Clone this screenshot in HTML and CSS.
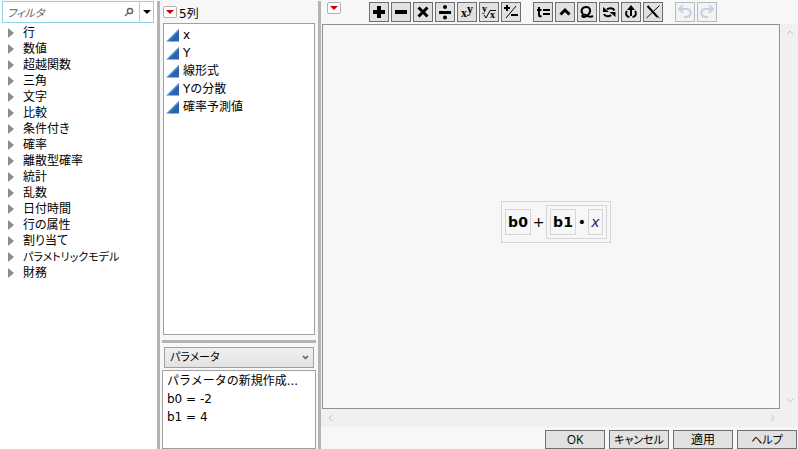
FILE: index.html
```html
<!DOCTYPE html>
<html lang="ja">
<head>
  <meta charset="UTF-8">
  <meta name="viewport" content="width=device-width, initial-scale=1.0">
  <title>計算式エディタ</title>
  <link rel="stylesheet" href="styles.css">
</head>
<body>

  <div class="editor">

    <!-- Function list -->
    <aside class="functions">
      <div class="filter">
        <input type="text" class="filter-input" placeholder="フィルタ" aria-label="フィルタ">
        <svg class="search-icon" width="10" height="10" viewBox="0 0 10 10"><circle cx="6" cy="4" r="2.6"/><path d="M4 6L1 9"/></svg>
        <button class="filter-menu" aria-label="フィルタのオプション"></button>
      </div>
      <ul class="tree">
        <li>行</li>
        <li>数値</li>
        <li>超越関数</li>
        <li>三角</li>
        <li>文字</li>
        <li>比較</li>
        <li>条件付き</li>
        <li>確率</li>
        <li>離散型確率</li>
        <li>統計</li>
        <li>乱数</li>
        <li>日付時間</li>
        <li>行の属性</li>
        <li>割り当て</li>
        <li class="kana">パラメトリックモデル</li>
        <li>財務</li>
      </ul>
    </aside>

    <!-- Columns and parameters -->
    <section class="middle">
      <div class="columns-head">
        <button class="red-menu" aria-label="列メニュー"></button>
        <span>5列</span>
      </div>
      <ul class="columns">
        <li>x</li>
        <li>Y</li>
        <li>線形式</li>
        <li>Yの分散</li>
        <li>確率予測値</li>
      </ul>
      <div class="splitter"></div>
      <div class="select-wrap">
        <select class="kind kana" aria-label="種類">
          <option>パラメータ</option>
        </select>
        <svg class="chevron" width="7" height="5" viewBox="0 0 7 5"><path d="M1 1l2.5 2.5L6 1"/></svg>
      </div>
      <ul class="params">
        <li>パラメータの新規作成...</li>
        <li>b0 = -2</li>
        <li>b1 = 4</li>
      </ul>
    </section>

    <!-- Formula -->
    <main class="formula-pane">
      <div class="toolbar">
        <button class="red-menu" aria-label="計算式メニュー"></button>
        <div class="tools">
          <button class="tool" aria-label="加算"><svg viewBox="0 0 18 18"><path class="fill" d="M7 3h4v4h4v4h-4v4H7v-4H3V7h4z"/></svg></button>
          <button class="tool" aria-label="減算"><svg viewBox="0 0 18 18"><path class="fill" d="M3 7h12v4H3z"/></svg></button>
          <button class="tool" aria-label="乗算"><svg viewBox="0 0 18 18"><path class="line w3" d="M4.5 4.5l9 9M13.5 4.5l-9 9"/></svg></button>
          <button class="tool" aria-label="除算"><svg viewBox="0 0 18 18"><path class="fill" d="M3 8h12v3H3z"/><circle class="fill" cx="9" cy="4" r="2"/><circle class="fill" cx="9" cy="14.5" r="2"/></svg></button>
          <button class="tool" aria-label="べき乗"><svg viewBox="0 0 18 18"><text x="3" y="14" font-size="12">x</text><text x="9" y="10" font-size="12">y</text></svg></button>
          <button class="tool" aria-label="累乗根"><svg viewBox="0 0 18 18"><text x="2" y="9" font-size="10">y</text><text x="10" y="15" font-size="10">x</text><path class="line" d="M4 12l2 3 4-7.500h6"/></svg></button>
          <button class="tool" aria-label="符号の変更"><svg viewBox="0 0 18 18"><path class="line" d="M14 3L4 15"/><path class="fill" d="M4 2h2v2h2v2H6v2H4V6H2V4h2zM9 11h7v2H9z"/></svg></button>
        </div>
        <div class="tools">
          <button class="tool" aria-label="ローカル変数"><svg viewBox="0 0 18 18"><path class="line w2" d="M5 4v8q0 2 2.5 1M3 7h4.5M9 7h7M9 11h7"/></svg></button>
          <button class="tool" aria-label="挿入"><svg viewBox="0 0 18 18"><path class="line w3" d="M4.5 11.5L9 7l4.5 4.5"/></svg></button>
          <button class="tool" aria-label="ループ"><svg viewBox="0 0 18 18"><path class="line w2" d="M5 11C2 8 4 4 8 4c4 0 5 3 3.500 6S6 15 4.500 13.500 7 11 9 12.500s4 1.500 6 .5"/></svg></button>
          <button class="tool" aria-label="入れ替え"><svg viewBox="0 0 18 18"><path class="line w2" d="M7 6.5c2-2 6-1.5 7.5 1M4 11c1 2.5 5 3 7 1"/><path class="fill" d="M3 4v5h6zM15.5 14V9h-6z"/></svg></button>
          <button class="tool" aria-label="取り出す"><svg viewBox="0 0 18 18"><path class="line w2" d="M9 6v7M5 8c-2 2-1 5.5 2.5 6M13 8c2 2 1 5.5-2.5 6"/><path class="fill" d="M9 2l4 5H5z"/></svg></button>
          <button class="tool" aria-label="削除"><svg viewBox="0 0 18 18"><path class="line w2" d="M3.5 3l10 11"/><path class="line" d="M15.5 2.5l-13 12.5M13 13l2.5 2"/></svg></button>
        </div>
        <div class="tools">
          <button class="tool" disabled aria-label="元に戻す"><svg viewBox="0 0 18 18"><path class="line w2" d="M7 2.5L3 6l4 3.5M3.5 6H11c5 0 5 8-1 8H8"/></svg></button>
          <button class="tool" disabled aria-label="やり直し"><svg viewBox="0 0 18 18"><path class="line w2" d="M11 2.5L15 6l-4 3.5M14.5 6H7c-5 0-5 8 1 8h2"/></svg></button>
        </div>
      </div>

      <div class="canvas-row">
        <div class="canvas">
          <div class="term">
            <span class="term param">b0</span>
            <span class="op plus">+</span>
            <div class="term product">
              <span class="term param">b1</span>
              <span class="op dot">•</span>
              <span class="term variable">x</span>
            </div>
          </div>
        </div>
        <div class="scroll-y">
          <svg width="8" height="6" viewBox="0 0 8 6"><path d="M1 5l3-3 3 3"/></svg>
          <svg width="8" height="6" viewBox="0 0 8 6"><path d="M1 1l3 3 3-3"/></svg>
        </div>
      </div>
      <div class="scroll-x">
        <svg width="6" height="8" viewBox="0 0 6 8"><path d="M5 1L2 4l3 3"/></svg>
        <svg width="6" height="8" viewBox="0 0 6 8"><path d="M1 1l3 3-3 3"/></svg>
      </div>

      <div class="actions">
        <button>OK</button>
        <button class="kana">キャンセル</button>
        <button>適用</button>
        <button class="kana">ヘルプ</button>
      </div>
    </main>

  </div>

</body>
</html>
```
FILE: styles.css
```css
* {
  box-sizing: border-box;
  margin: 0;
  padding: 0;
}

body {
  font-family: "Open Sans", "Noto Sans CJK JP", sans-serif;
  font-size: 12px;
  color: #000;
  background-color: #f7f7f7;
}

ul {
  list-style: none;
}

button,
input,
select {
  font: inherit;
  color: inherit;
}

.editor {
  display: flex;
  height: 100vh;
  padding-top: 1px;
}

/* Function list */
.functions {
  width: 160px;
  padding-left: 2px;
  border-right: 3px solid #b4b4b4;
  background: #fff;
  flex-shrink: 0;
}

.filter {
  display: flex;
  align-items: center;
  height: 22px;
  margin-right: 3px;
  border: 1px solid #8ed0ee;
}

.filter-input {
  flex: 1;
  min-width: 0;
  height: 18px;
  padding-left: 4px;
  border: none;
  outline: none;
  background: none;
  font-size: 11px;
  font-style: italic;
  font-feature-settings: "palt";
}

.filter-input::placeholder {
  color: #666;
}

.search-icon {
  margin-right: 5px;
  fill: none;
  stroke: #666;
  stroke-width: 1.5;
}

.filter-menu {
  display: flex;
  align-items: center;
  justify-content: center;
  width: 14px;
  height: 20px;
  border: none;
  border-left: 1px solid #8ed0ee;
  background: none;
}

.filter-menu::before {
  content: "";
  border: 4px solid transparent;
  border-top-color: #000;
  border-bottom: none;
}

.tree {
  padding-top: 2px;
  font-feature-settings: "palt";
}

.tree li {
  display: flex;
  align-items: center;
  gap: 9px;
  padding-left: 6px;
  line-height: 16px;
  white-space: nowrap;
}

.tree li::before {
  content: "";
  border: 5px solid transparent;
  border-left: 6px solid #8c8c8c;
  border-right: none;
}

.tree .kana,
.select-wrap .kana,
.actions .kana {
  font-size: 11px;
}

/* Columns and parameters */
.middle {
  display: flex;
  flex-direction: column;
  width: 161px;
  padding: 0 2px;
  border-right: 3px solid #b4b4b4;
  flex-shrink: 0;
  font-family: "DejaVu Sans", "Noto Sans CJK JP", sans-serif;
}

.columns-head {
  display: flex;
  align-items: center;
  gap: 2px;
  height: 22px;
  padding-left: 1px;
}

.red-menu {
  display: flex;
  align-items: center;
  justify-content: center;
  width: 14px;
  height: 12px;
  border: 1px solid #b0b0b0;
  border-radius: 2px;
  background: #fff;
}

.red-menu::before {
  content: "";
  border: 4px solid transparent;
  border-top-color: #d00000;
  border-bottom: none;
}

.columns {
  flex: 1;
  margin: 0 1px;
  padding: 2px;
  border: 1px solid #a0a0a0;
  background: #fff;
}

.columns li {
  display: flex;
  align-items: center;
  gap: 4px;
  line-height: 18px;
}

.columns li::before {
  content: "";
  width: 13px;
  height: 13px;
  background: linear-gradient(135deg, #6fa3de 50%, #2a62b0 60%);
  clip-path: polygon(100% 0, 100% 100%, 0 100%);
}

.splitter {
  height: 3px;
  margin: 5px 0 4px;
  background: #b4b4b4;
}

.select-wrap {
  display: grid;
  align-items: center;
  margin: 0 2px;
}

.kind {
  grid-area: 1 / 1;
  height: 21px;
  padding-left: 5px;
  border: 1px solid #a0a0a0;
  border-radius: 0;
  background: linear-gradient(#f0f0f0, #e2e2e2);
  appearance: none;
  font-feature-settings: "palt";
}

.chevron {
  grid-area: 1 / 1;
  justify-self: end;
  margin-right: 5px;
  fill: none;
  stroke: #555;
  stroke-width: 1.5;
  pointer-events: none;
}

.params {
  height: 79px;
  margin-top: 2px;
  padding: 1px 4px;
  border: 1px solid #a0a0a0;
  background: #fff;
  line-height: 18px;
  white-space: nowrap;
}

/* Formula */
.formula-pane {
  display: flex;
  flex-direction: column;
  flex: 1;
  min-width: 0;
}

.toolbar {
  display: flex;
  gap: 12px;
  height: 23px;
  padding: 1px 0 0 6px;
}

.toolbar .red-menu {
  margin-right: 16px;
}

.tools {
  display: flex;
  gap: 2px;
}

.tool {
  width: 20px;
  height: 20px;
  border: 1px solid #6e6e6e;
  background: #e1e1e1;
}

.tool svg {
  display: block;
  width: 18px;
  height: 18px;
  fill: #000;
  stroke: none;
  font-family: "Liberation Serif", serif;
  font-weight: bold;
}

.tool .line {
  fill: none;
  stroke: #000;
}

.tool .w2 {
  stroke-width: 2;
}

.tool .w3 {
  stroke-width: 3;
}

.tool:disabled {
  border-color: #b4bac0;
  background: #f1f3f5;
}

.tool:disabled .line {
  stroke: #c3d3e5;
}

.canvas-row {
  display: flex;
  flex: 1;
  min-height: 0;
}

.canvas {
  display: flex;
  align-items: center;
  justify-content: center;
  flex: 1;
  margin-left: 1px;
  padding: 10px 0 0 10px;
  border: 1px solid #909090;
}

.term {
  display: flex;
  align-items: center;
  padding: 3px;
  border: 1px solid #d6d6d6;
  font-family: "DejaVu Sans", sans-serif;
  font-size: 14px;
  line-height: 24px;
}

.param {
  justify-content: center;
  width: 26px;
  padding: 0;
  font-weight: bold;
}

.op {
  text-align: center;
  font-family: "DejaVu Sans", sans-serif;
  font-size: 14px;
}

.plus {
  width: 15px;
}

.dot {
  width: 12px;
}

.variable {
  justify-content: center;
  width: 15px;
  padding: 0;
  color: #1c2460;
  font-style: italic;
}

.scroll-y,
.scroll-x {
  display: flex;
  justify-content: space-between;
  align-items: center;
  background: #f0f0f0;
  fill: none;
  stroke: #c4c4c4;
}

.scroll-y {
  flex-direction: column;
  width: 17px;
  margin-left: 1px;
  padding: 5px 0;
}

.scroll-x {
  height: 18px;
  padding: 0 22px 0 6px;
}

.actions {
  display: flex;
  justify-content: flex-end;
  gap: 4px;
  padding: 3px 1px 0 0;
}

.actions button {
  width: 60px;
  height: 19px;
  border: 1px solid #707070;
  background: #e1e1e1;
  line-height: 17px;
  white-space: nowrap;
  font-feature-settings: "palt";
}
```
